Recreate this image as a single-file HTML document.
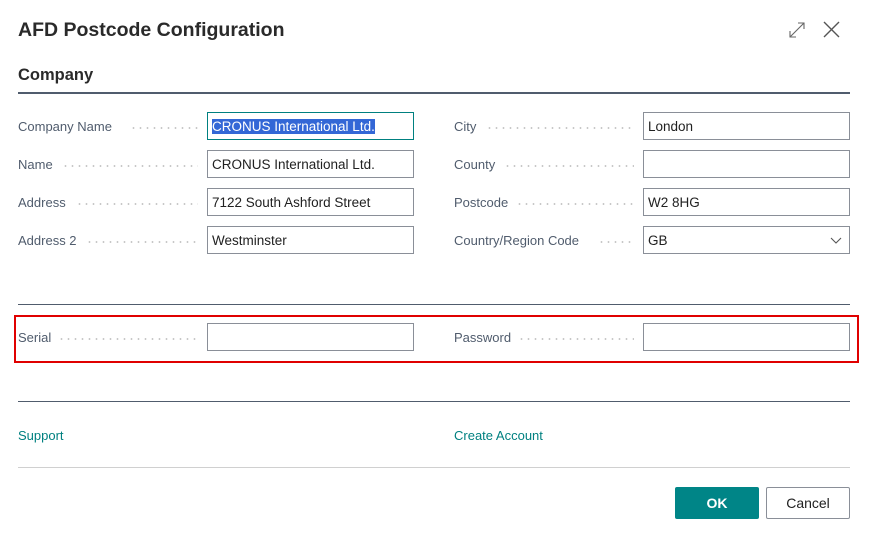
<!DOCTYPE html>
<html><head><style>
body{margin:0;width:872px;height:542px;background:#fff;font-family:"Liberation Sans",sans-serif;position:relative;overflow:hidden;color:#212121}
.a{position:absolute}
.lbl{position:absolute;font-size:13px;color:#505c6d;white-space:nowrap;height:28px;line-height:28px}
.lbl span.d{position:absolute;height:2px;top:14px;background-image:radial-gradient(circle,#c8c8c8 0.8px,transparent 1px);background-size:7px 2px}
.inp{position:absolute;height:26px;border:1px solid #8a8f98;font-size:13.5px;line-height:28px;padding-left:4px;box-sizing:content-box;color:#212121}
.inp.l{left:207px;width:201px}
.inp.r{left:643px;width:201px}
</style></head><body>
<div class="a" style="left:18px;top:19px;font-size:19.5px;font-weight:bold;color:#2a2a2a">AFD Postcode Configuration</div>
<svg class="a" style="left:788px;top:21px" width="18" height="18" viewBox="0 0 18 18" fill="none" stroke="#666" stroke-width="1.1"><path d="M2 16L16 2M10 2h6v6M2 10v6h6"/></svg>
<svg class="a" style="left:823px;top:21px" width="17" height="17" viewBox="0 0 17 17" fill="none" stroke="#555" stroke-width="1.4"><path d="M1 1L16 16M16 1L1 16"/></svg>
<div class="a" style="left:18px;top:66px;font-size:16.5px;font-weight:bold;color:#2a2a2a">Company</div>
<div class="a" style="left:18px;top:92px;width:832px;height:2px;background:#505c6d"></div>

<div class="lbl" style="left:18px;top:113px">Company Name<span class="d" style="left:112px;width:68px"></span></div>
<div class="lbl" style="left:18px;top:151px">Name<span class="d" style="left:44px;width:136px"></span></div>
<div class="lbl" style="left:18px;top:189px">Address<span class="d" style="left:58px;width:122px"></span></div>
<div class="lbl" style="left:18px;top:227px">Address 2<span class="d" style="left:68px;width:112px"></span></div>
<div class="inp l" style="top:112px;border-color:#008080"><span style="background:#3367d6;color:#fff">CRONUS International Ltd.</span></div>
<div class="inp l" style="top:150px">CRONUS International Ltd.</div>
<div class="inp l" style="top:188px">7122 South Ashford Street</div>
<div class="inp l" style="top:226px">Westminster</div>

<div class="lbl" style="left:454px;top:113px">City<span class="d" style="left:32px;width:148px"></span></div>
<div class="lbl" style="left:454px;top:151px">County<span class="d" style="left:50px;width:130px"></span></div>
<div class="lbl" style="left:454px;top:189px">Postcode<span class="d" style="left:62px;width:118px"></span></div>
<div class="lbl" style="left:454px;top:227px">Country/Region Code<span class="d" style="left:144px;width:36px"></span></div>
<div class="inp r" style="top:112px">London</div>
<div class="inp r" style="top:150px"></div>
<div class="inp r" style="top:188px">W2 8HG</div>
<div class="inp r" style="top:226px">GB<svg class="a" style="left:186px;top:10px" width="12" height="8" viewBox="0 0 12 8" fill="none" stroke="#555" stroke-width="1.1"><path d="M1 1l5 5 5-5"/></svg></div>

<div class="a" style="left:18px;top:304px;width:832px;height:1px;background:#505c6d"></div>
<div class="a" style="left:14px;top:315px;width:841px;height:44px;border:2px solid #e00000"></div>
<div class="lbl" style="left:18px;top:324px">Serial<span class="d" style="left:40px;width:140px"></span></div>
<div class="inp l" style="top:323px"></div>
<div class="lbl" style="left:454px;top:324px">Password<span class="d" style="left:64px;width:116px"></span></div>
<div class="inp r" style="top:323px"></div>

<div class="a" style="left:18px;top:401px;width:832px;height:1px;background:#505c6d"></div>
<div class="a" style="left:18px;top:428px;font-size:13px;color:#008080">Support</div>
<div class="a" style="left:454px;top:428px;font-size:13px;color:#008080">Create Account</div>
<div class="a" style="left:18px;top:467px;width:832px;height:1px;background:#d0d0d0"></div>
<div class="a" style="left:675px;top:487px;width:84px;height:32px;background:#008587;border-radius:2px;color:#fff;font-size:14px;font-weight:bold;text-align:center;line-height:32px">OK</div>
<div class="a" style="left:766px;top:487px;width:82px;height:30px;border:1px solid #8a8f98;border-radius:2px;font-size:14px;text-align:center;line-height:30px">Cancel</div>
</body></html>
